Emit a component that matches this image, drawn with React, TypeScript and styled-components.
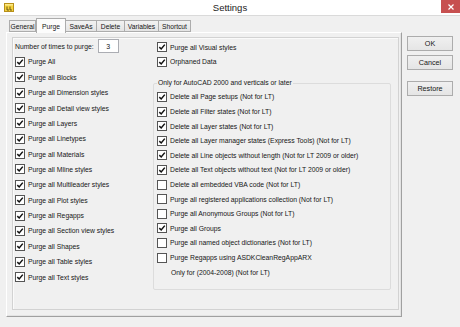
import React from "react";
import styled, { createGlobalStyle } from "styled-components";

const GlobalStyle = createGlobalStyle`
  html, body {
    margin: 0;
    padding: 0;
    background: #f0f0f0;
  }
  body {
    font-family: "Liberation Sans", Arial, sans-serif;
  }
`;

const Window = styled.div`
  width: 460px;
  height: 327px;
  background: #f0f0f0;
  display: flex;
  flex-direction: column;
  overflow: hidden;
  color: #161616;
  font-size: 6.8px;
`;

const TitleBar = styled.div`
  height: 15px;
  flex: none;
  background: #fff;
  border-bottom: 1px solid #dadada;
  display: grid;
  grid-template-columns: 1fr auto 1fr;
  align-items: center;
`;

const AppIcon = styled.svg`
  justify-self: start;
  margin-left: 4px;
  width: 10px;
  height: 9px;
`;

const Title = styled.div`
  font-size: 9.5px;
  color: #1b1b1b;
`;

const CloseButton = styled.div`
  justify-self: end;
  align-self: start;
  width: 19px;
  height: 13px;
  background: #c75050;
  display: flex;
  align-items: center;
  justify-content: center;
`;

const Body = styled.div`
  flex: 1;
  display: flex;
  padding: 2px 0 0 6px;
`;

const TabControl = styled.div`
  width: 396px;
  display: flex;
  flex-direction: column;
`;

const TabStrip = styled.div`
  height: 14px;
  display: flex;
  align-items: flex-end;
  padding-left: 3px;
`;

const Tab = styled.div<{ $w: number; $active?: boolean }>`
  width: ${(p) => p.$w}px;
  height: ${(p) => (p.$active ? 15 : 12)}px;
  margin-bottom: ${(p) => (p.$active ? -1 : 0)}px;
  box-sizing: border-box;
  border: 1px solid #acacac;
  border-bottom: ${(p) => (p.$active ? "none" : "1px solid #acacac")};
  margin-left: ${(p) => (p.$active ? 0 : -1)}px;
  background: ${(p) =>
    p.$active ? "#fcfcfc" : "linear-gradient(#f2f2f2, #e4e4e4)"};
  position: relative;
  z-index: ${(p) => (p.$active ? 2 : 0)};
  display: flex;
  align-items: center;
  justify-content: center;
  font-size: 6.7px;
  padding-top: ${(p) => (p.$active ? 0 : 1)}px;
  &:first-child {
    margin-left: 0;
  }
`;

const TabPanel = styled.div`
  height: 285px;
  box-sizing: border-box;
  border: 1px solid;
  border-color: #fff #a0a0a0 #a0a0a0 #fff;
  box-shadow: inset -1px -1px 0 #e3e3e3;
  padding: 4px 2px 6px 5px;
  display: flex;
`;

const Frame = styled.div`
  flex: 1;
  display: flex;
  border: 1px solid #d2d2d2;
  box-shadow: inset 1px 1px 0 #fafafa;
`;

const LeftColumn = styled.div`
  width: 140px;
  padding-left: 2px;
  box-sizing: border-box;
  display: flex;
  flex-direction: column;
`;

const RightColumn = styled.div`
  flex: 1;
  padding: 1.75px 7px 0 0;
  display: flex;
  flex-direction: column;
`;

const Indented = styled.div`
  padding-left: 4px;
`;

const NumberRow = styled.div`
  height: 16.3px;
  display: flex;
  align-items: center;
`;

const NumberInput = styled.div`
  width: 21px;
  height: 14px;
  box-sizing: border-box;
  margin-left: 4px;
  background: #fff;
  border: 1px solid #abadb3;
  display: flex;
  align-items: center;
  justify-content: center;
  font-size: 7px;
`;

const Row = styled.div<{ $h: number }>`
  height: ${(p) => p.$h}px;
  display: flex;
  align-items: center;
  gap: 3px;
  white-space: nowrap;
`;

const Box = styled.div`
  width: 10px;
  height: 10px;
  box-sizing: border-box;
  flex: none;
  background: #fff;
  border: 1px solid #555;
  display: flex;
  align-items: center;
  justify-content: center;
`;

const GroupBox = styled.fieldset`
  margin: 9.25px 0 0 0;
  padding: 1.7px 3px 9.5px 3px;
  min-width: 0;
  border: 1px solid #dcdcdc;
  border-radius: 2px;
`;

const Legend = styled.legend`
  padding: 0 1px;
  line-height: 10px;
  font-size: 6.8px;
`;

const Note = styled.div`
  height: 14.6px;
  display: flex;
  align-items: center;
  padding-left: 14px;
`;

const ButtonColumn = styled.div`
  margin-left: 5px;
  padding-top: 18px;
  display: flex;
  flex-direction: column;
`;

const Button = styled.div<{ $gap: number }>`
  width: 46px;
  height: 14.5px;
  box-sizing: border-box;
  margin-top: ${(p) => p.$gap}px;
  border: 1px solid #acacac;
  background: linear-gradient(#f0f0f0, #e5e5e5);
  display: flex;
  align-items: center;
  justify-content: center;
  font-size: 7.2px;
`;

const Check = ({ on, label, h }: { on: boolean; label: string; h: number }) => (
  <Row $h={h}>
    <Box>
      {on && (
        <svg width="8" height="8" viewBox="0 0 8 8">
          <path d="M1.3 4.1 L3.2 6 L6.8 1.6" fill="none" stroke="#111" strokeWidth="1.5" />
        </svg>
      )}
    </Box>
    <span>{label}</span>
  </Row>
);

const tabs = [
  { name: "General", w: 27 },
  { name: "Purge", w: 30, active: true },
  { name: "SaveAs", w: 32 },
  { name: "Delete", w: 29 },
  { name: "Variables", w: 35 },
  { name: "Shortcut", w: 33 },
];

const leftItems = [
  "Purge All",
  "Purge all Blocks",
  "Purge all Dimension styles",
  "Purge all Detail view styles",
  "Purge all Layers",
  "Purge all Linetypes",
  "Purge all Materials",
  "Purge all Mline styles",
  "Purge all Multileader styles",
  "Purge all Plot styles",
  "Purge all Regapps",
  "Purge all Section view styles",
  "Purge all Shapes",
  "Purge all Table styles",
  "Purge all Text styles",
];

const groupItems: [string, boolean][] = [
  ["Delete all Page setups (Not for LT)", true],
  ["Delete all Filter states (Not for LT)", true],
  ["Delete all Layer states (Not for LT)", true],
  ["Delete all Layer manager states (Express Tools) (Not for LT)", true],
  ["Delete all Line objects without length (Not for LT 2009 or older)", true],
  ["Delete all Text objects without text (Not for LT 2009 or older)", true],
  ["Delete all embedded VBA code (Not for LT)", false],
  ["Purge all registered applications collection (Not for LT)", false],
  ["Purge all Anonymous Groups (Not for LT)", false],
  ["Purge all Groups", true],
  ["Purge all named object dictionaries (Not for LT)", false],
  ["Purge Regapps using ASDKCleanRegAppARX", false],
];

export default function App() {
  return (
    <Window>
      <GlobalStyle />
      <TitleBar>
        <AppIcon viewBox="0 0 10 9">
          <rect x="0.5" y="0.5" width="9" height="8" fill="#f4d23c" stroke="#b8901a" />
          <rect x="1" y="1" width="8" height="1.5" fill="#fbe98a" />
          <path d="M3 3.5 V7 M3 7 H5 M6 3.5 V7 H8" stroke="#5a4a10" strokeWidth="0.9" fill="none" />
        </AppIcon>
        <Title>Settings</Title>
        <CloseButton>
          <svg width="6" height="6" viewBox="0 0 6 6">
            <path d="M0.5 0.5 L5.5 5.5 M5.5 0.5 L0.5 5.5" stroke="#fff" strokeWidth="1.2" />
          </svg>
        </CloseButton>
      </TitleBar>
      <Body>
        <TabControl>
          <TabStrip>
            {tabs.map((t) => (
              <Tab key={t.name} $w={t.w} $active={t.active}>
                {t.name}
              </Tab>
            ))}
          </TabStrip>
          <TabPanel>
            <Frame>
              <LeftColumn>
                <NumberRow>
                  <span>Number of times to purge:</span>
                  <NumberInput>3</NumberInput>
                </NumberRow>
                {leftItems.map((l) => (
                  <Check key={l} on label={l} h={15.36} />
                ))}
              </LeftColumn>
              <RightColumn>
                <Indented>
                  <Check on label="Purge all Visual styles" h={14.5} />
                  <Check on label="Orphaned Data" h={14.5} />
                </Indented>
                <GroupBox>
                  <Legend>Only for AutoCAD 2000 and verticals or later</Legend>
                  {groupItems.map(([l, on]) => (
                    <Check key={l} on={on} label={l} h={14.6} />
                  ))}
                  <Note>Only for (2004-2008) (Not for LT)</Note>
                </GroupBox>
              </RightColumn>
            </Frame>
          </TabPanel>
        </TabControl>
        <ButtonColumn>
          <Button $gap={0}>OK</Button>
          <Button $gap={4.5}>Cancel</Button>
          <Button $gap={11.5}>Restore</Button>
        </ButtonColumn>
      </Body>
    </Window>
  );
}
